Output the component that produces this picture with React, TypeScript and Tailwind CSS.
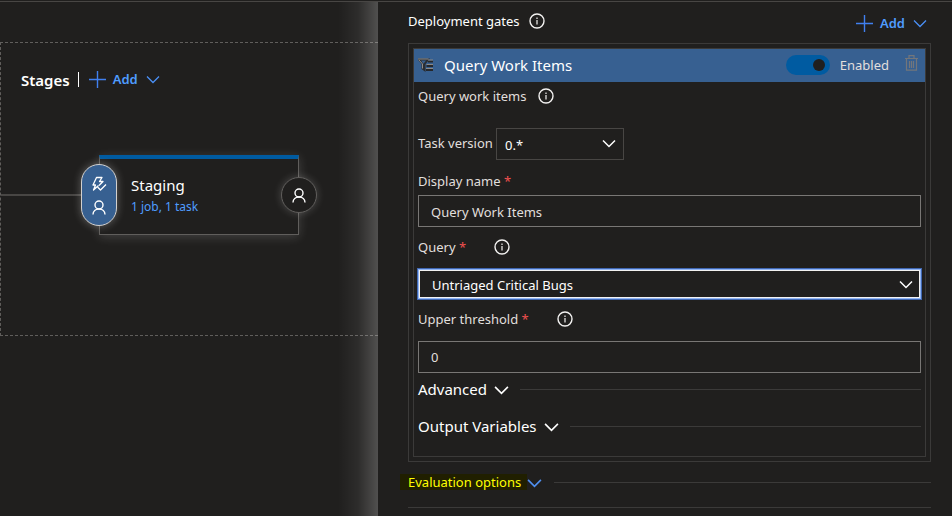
import type { ReactNode } from 'react';

function Info() {
  return (
    <svg width="16" height="16" viewBox="0 0 16 16" fill="none" stroke="#f3f2f1" className="shrink-0" aria-hidden="true">
      <circle cx="8" cy="8" r="7" strokeWidth="1.4" />
      <path d="M8 7v4.500M8 4.500v1.400" strokeWidth="1.2" />
    </svg>
  );
}

function InfoButton({ label }: { label: string }) {
  return (
    <button type="button" aria-label={label} className="shrink-0">
      <Info />
    </button>
  );
}

function Chevron({ size = 14, width = 1.5 }: { size?: number; width?: number }) {
  return (
    <svg width={size} height={size} viewBox="0 0 14 14" fill="none" stroke="currentColor" strokeWidth={width} className="shrink-0" aria-hidden="true">
      <path d="M1 4.500l6 6 6-6" />
    </svg>
  );
}

function Person() {
  return (
    <svg width="14" height="15" viewBox="0 0 14 15" fill="none" stroke="#fff" strokeWidth="1.4" aria-hidden="true">
      <circle cx="7" cy="5" r="4" />
      <path d="M1 14.500c0-3.200 2.600-5.500 6-5.500s6 2.300 6 5.500" />
    </svg>
  );
}

function TriggerIcon() {
  return (
    <svg width="16" height="16" viewBox="0 0 16 16" fill="none" stroke="#fff" strokeWidth="1.3" strokeLinejoin="round" aria-hidden="true">
      <path d="M7.500 9.500L2.500 14l2-5H2L5.500 1.500H11L8.500 5.500H12L8 9.500" />
      <path d="M6.500 11l3 3L15 8.500" />
    </svg>
  );
}

function AddButton() {
  return (
    <button type="button" className="flex items-center text-[13px] leading-5 font-semibold text-[#4f9cff]">
      <svg width="17" height="17" viewBox="0 0 17 17" stroke="#4080f0" strokeWidth="1.4" aria-hidden="true">
        <path d="M8.500 0v17M0 8.500h17" />
      </svg>
      <span className="ml-[7px]">Add</span>
      <span className="ml-2 flex text-[#4a8ff5]">
        <Chevron width={1.3} />
      </span>
    </button>
  );
}

function Required() {
  return <span className="text-[#f1504f]">*</span>;
}

function Expander({ children }: { children: ReactNode }) {
  return (
    <div className="flex items-center">
      <button type="button" className="flex items-center gap-[7px] text-[15px] leading-5 text-white">
        {children}
        <Chevron size={15} />
      </button>
      <div className="ml-[11px] h-px flex-1 bg-[#3b3a39]" />
    </div>
  );
}

function Pipeline() {
  return (
    <main className="relative min-w-0 flex-1 overflow-hidden pt-10">
      <section className="h-[294px] border-y border-l border-dashed border-[#605e5c]">
        <header className="flex items-center pt-[26px] pl-5">
          <h2 className="text-[15px] leading-5 font-semibold text-white">Stages</h2>
          <div className="mr-2.5 ml-2 mb-0.5 h-[15px] w-px bg-white" />
          <div className="pb-0.5">
            <AddButton />
          </div>
        </header>
        <div className="mt-[64px] flex items-center">
          <div className="h-0.5 w-[98px] bg-[#484644]" />
          <article className="relative h-20 w-[200px] border border-t-4 border-[#605e5c] border-t-[#005ba1] bg-[#201f1e] pt-3.5 pl-[31px] shadow-[0_2px_10px_rgba(255,255,255,0.16)]">
            <h3 className="text-[15px] leading-6 text-white">Staging</h3>
            <a href="#tasks" className="block text-[12px] leading-5 text-[#4f9cff]">
              1 job, 1 task
            </a>
            <button
              type="button"
              aria-label="Pre-deployment conditions"
              className="absolute top-[5px] -left-[19px] flex h-[62px] w-9 flex-col items-center justify-center gap-2 rounded-full border border-[#d2d0ce] bg-[#376091] shadow-[0_0_8px_rgba(255,255,255,0.3)]"
            >
              <TriggerIcon />
              <Person />
            </button>
            <button
              type="button"
              aria-label="Post-deployment conditions"
              className="absolute top-[18px] -right-[19px] flex size-9 items-center justify-center rounded-full border border-[#605e5c] bg-[#201f1e] shadow-[0_0_8px_rgba(255,255,255,0.2)]"
            >
              <Person />
            </button>
          </article>
        </div>
      </section>
      <div className="pointer-events-none absolute inset-y-0 right-0 w-10 bg-linear-to-r from-white/0 via-white/6 to-white/22" />
    </main>
  );
}

function GateHeader() {
  return (
    <header className="flex h-[33px] items-center bg-[#376091] pr-[7px] pb-0.5 pl-1">
      <svg width="16" height="14" viewBox="0 0 16 14" fill="none" aria-hidden="true">
        <path d="M1 1.500h9L6.500 6v6L4.500 10.500V6z" stroke="#2b2d31" strokeWidth="2" />
        <path d="M0 1h10.500M1 2l3.500 4v4.500" stroke="#8f8d8b" strokeWidth="1" />
        <path d="M10 3.500h5M8.500 8h6.500M8 12h7" stroke="#25272b" strokeWidth="2" />
        <path d="M10 2h5M8.500 6.500h6.500M8 10.500h7" stroke="#8a8886" strokeWidth="1" />
      </svg>
      <h2 className="ml-2.5 flex-1 text-[15px] leading-5 text-white">Query Work Items</h2>
      <label className="flex items-center text-[13px] leading-5 text-[#e1dfdd]">
        <input type="checkbox" role="switch" defaultChecked className="peer sr-only" />
        <span className="mr-2.5 flex h-5 w-11 items-center justify-end rounded-full bg-[#005ba1] pr-[5px]">
          <span className="size-3 rounded-full bg-[#201f1e]" />
        </span>
        Enabled
      </label>
      <button type="button" aria-label="Delete gate" className="ml-4 pb-1">
        <svg width="13" height="16" viewBox="0 0 13 16" fill="none" stroke="#73767b" strokeWidth="1.2" aria-hidden="true">
          <path d="M0 3.500h13M4 3V.7h5V3M1.500 3.500v11.700h10V3.500M4.500 6v7M6.500 6v7M8.500 6v7" />
        </svg>
      </button>
    </header>
  );
}

function GatesPanel() {
  return (
    <aside className="w-[574px] shrink-0 bg-[#201f1e] pr-[21px] pl-[30px] text-[13px] leading-5 text-[#e1dfdd]">
      <div className="flex items-center pt-[7px]">
        <h2 className="text-white">Deployment gates</h2>
        <div className="ml-[9px] flex flex-1 items-center">
          <InfoButton label="About deployment gates" />
        </div>
        <div className="pt-1 pr-1">
          <AddButton />
        </div>
      </div>
      <div className="mt-2.5 border border-[#3b3a39] p-1">
        <section className="border border-[#3b3a39] pb-5">
          <GateHeader />
          <div className="flex flex-col px-1">
            <div className="mt-1 flex items-center gap-3">
              <span>Query work items</span>
              <InfoButton label="About query work items" />
            </div>
            <div className="mt-[22px] flex items-center">
              <label htmlFor="version" className="w-[78px] pb-0.5">
                Task version
              </label>
              <div className="relative w-32 text-white">
                <select id="version" className="block h-8 w-full appearance-none border border-[#484644] bg-transparent px-2 pt-0.5">
                  <option>0.*</option>
                </select>
                <span className="pointer-events-none absolute top-2 right-2">
                  <Chevron />
                </span>
              </div>
            </div>
            <label htmlFor="display" className="mt-[11px]">
              Display name <Required />
            </label>
            <input id="display" type="text" defaultValue="Query Work Items" className="mt-1 h-8 border border-[#797775] bg-transparent px-3 pt-0.5" />
            <div className="mt-2.5 flex items-center gap-7">
              <label htmlFor="query">
                Query <Required />
              </label>
              <InfoButton label="About query" />
            </div>
            <div className="relative mt-3 text-white">
              <select
                id="query"
                className="block h-[30px] w-full appearance-none border border-[#8fb4f5] bg-transparent px-[13px] pt-0.5 inset-shadow-[0_0_0_1px_#f3f2f1] outline-1 outline-[#3f66b0]"
              >
                <option>Untriaged Critical Bugs</option>
              </select>
              <span className="pointer-events-none absolute top-2 right-2">
                <Chevron />
              </span>
            </div>
            <div className="mt-2.5 flex items-center gap-7">
              <label htmlFor="threshold">
                Upper threshold <Required />
              </label>
              <InfoButton label="About upper threshold" />
            </div>
            <input id="threshold" type="text" defaultValue="0" className="mt-3 mb-1.5 h-8 border border-[#797775] bg-transparent px-3" />
            <Expander>Advanced</Expander>
            <div className="h-[17px]" />
            <Expander>Output Variables</Expander>
          </div>
        </section>
      </div>
      <div className="mt-3 flex items-center border-b border-[#3b3a39] pb-[17px]">
        <button type="button" className="-ml-2 flex items-center text-[#ffff00]">
          <span className="bg-[#201f00] pr-1.5 pl-2 leading-4">Evaluation options</span>
          <span className="text-[#4f8ff0]">
            <Chevron size={15} />
          </span>
        </button>
        <div className="ml-3 h-px flex-1 bg-[#3b3a39]" />
      </div>
    </aside>
  );
}

export default function App() {
  return (
    <div className="flex min-h-screen flex-col bg-[#201f1e] font-['Segoe_UI','Noto_Sans','Open_Sans',sans-serif]">
      <div className="mt-px h-px bg-[#484644]" />
      <div className="flex flex-1">
        <Pipeline />
        <GatesPanel />
      </div>
    </div>
  );
}
